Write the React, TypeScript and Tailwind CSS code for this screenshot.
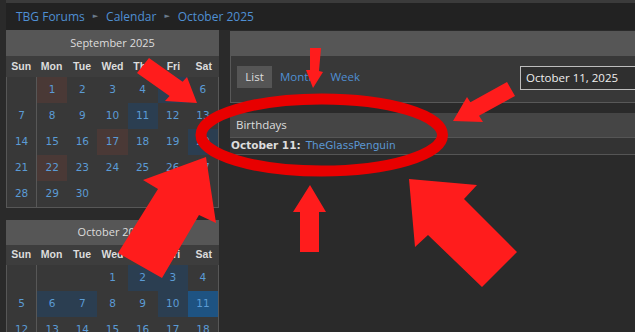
import React from "react";

type CalProps = {
  title: string;
  offset: number;
  days: number;
  hl: Record<number, "brown" | "blue" | "sel">;
  headCls: string;
  dowCls: string;
};

const DOW = ["Sun", "Mon", "Tue", "Wed", "Thu", "Fri", "Sat"];

function MiniCal({ title, offset, days, hl, headCls, dowCls }: CalProps) {
  const cells: (number | null)[] = [];
  for (let i = 0; i < offset; i++) cells.push(null);
  for (let d = 1; d <= days; d++) cells.push(d);
  while (cells.length % 7) cells.push(null);
  return (
    <div className="w-[213px]">
      <div className={headCls}>{title}</div>
      <div className={dowCls}>
        {DOW.map((d) => (
          <div key={d} className="flex items-center justify-center">
            {d}
          </div>
        ))}
      </div>
      <div className="grid grid-cols-7 border-x border-b border-[#575757] bg-[#383838] font-['DejaVu_Sans',sans-serif] text-[10.5px] text-[#5b9bd5]">
        {cells.map((c, i) => {
          const h = c ? hl[c] : undefined;
          let bg = "";
          if (h === "brown") bg = "bg-[#4a3936]";
          else if (h === "blue") bg = "bg-[#2b3e51]";
          else if (h === "sel") bg = "bg-[#1e5382]";
          const sun = i % 7 === 0 ? "border-r border-[#575757]" : "";
          return (
            <div key={i} className={`h-[26px] flex items-center justify-center ${bg} ${sun}`}>
              {c ?? ""}
            </div>
          );
        })}
      </div>
    </div>
  );
}

export default function App() {
  return (
    <div className="relative w-[635px] h-[332px] overflow-hidden bg-[#2a2a2a] font-['Open_Sans',sans-serif]">
      {/* breadcrumb */}
      <div className="ml-[6px] h-[30px] border-t-[3px] border-[#3b3b3b] bg-[#222222] flex items-center pl-[10px] text-[12px] text-[#4f8fd3]">
        <span>TBG Forums</span>
        <span className="mx-[8px] text-[7px] text-[#6a7a8a] font-['DejaVu_Sans',sans-serif]">►</span>
        <span>Calendar</span>
        <span className="mx-[8px] text-[7px] text-[#6a7a8a] font-['DejaVu_Sans',sans-serif]">►</span>
        <span>October 2025</span>
      </div>

      <div className="flex pl-[6px]">
        {/* sidebar */}
        <div className="flex flex-col gap-[12px] w-[213px] shrink-0">
          <MiniCal
            title="September 2025"
            offset={1}
            days={30}
            hl={{ 1: "brown", 5: "blue", 11: "blue", 17: "brown", 20: "blue", 22: "brown" }}
            headCls="h-[26px] bg-[#565656] flex items-center justify-center text-[11px] text-[#dddddd]"
            dowCls="h-[21px] grid grid-cols-7 bg-[#3d3d3d] font-['Liberation_Sans',sans-serif] font-bold text-[10.5px] text-[#dcdcdc]"
          />
          <MiniCal
            title="October 2025"
            offset={3}
            days={31}
            hl={{ 2: "blue", 3: "blue", 6: "blue", 7: "blue", 10: "blue", 11: "sel" }}
            headCls="h-[25px] bg-[#565656] flex items-center justify-center text-[11px] text-[#dddddd]"
            dowCls="h-[20px] grid grid-cols-7 bg-[#3d3d3d] font-['Liberation_Sans',sans-serif] font-bold text-[10.5px] text-[#dcdcdc]"
          />
        </div>

        {/* main */}
        <div className="ml-[11px] mt-[1px] w-[420px] shrink-0">
          <div className="h-[25px] bg-[#565656]" />
          <div className="h-[47px] border-l border-b border-[#585858] bg-[#383838] flex items-start pt-[10px] pl-[6px] pr-[6px] text-[11.5px]">
            <div className="w-[35px] h-[22px] bg-[#555555] flex items-center justify-center text-[#dddddd]">List</div>
            <span className="ml-[8px] h-[22px] flex items-center text-[#4f8fd3]">Month</span>
            <span className="ml-[15px] h-[22px] flex items-center text-[#4f8fd3]">Week</span>
            <div className="ml-auto w-[124px] h-[24px] border border-[#bdbdbd] bg-[#2f2f2f] flex items-center pl-[5px] text-[#eeeeee]">
              October 11, 2025
            </div>
          </div>
          <div className="mt-[10px]">
            <div className="h-[24px] bg-[#454545] flex items-center pl-[6px] text-[11.5px] text-[#dddddd]">Birthdays</div>
            <div className="h-[18px] border-t border-b border-[#555555] bg-[#333333] flex items-center pl-[1px] font-['DejaVu_Sans',sans-serif] text-[10.5px]">
              <span className="font-bold text-[#dddddd]">October 11:</span>
              <span className="ml-[5px] text-[#5b97d3]">TheGlassPenguin</span>
            </div>
          </div>
        </div>
      </div>

      {/* annotations */}
      <svg className="absolute inset-0 pointer-events-none" width="635" height="332" viewBox="0 0 635 332">
        <ellipse cx="321.75" cy="135" rx="120.75" ry="36" fill="none" stroke="#e80000" strokeWidth="11" />
        <g fill="#ff1c1c">
          <polygon points="149,58 182.6,81.8 187,77 197,103 165,101 169.6,96 137,73" />
          <polygon points="310,48 321,48 319,71 323,72 313,88 306,70 310,70" />
          <polygon points="453,121 467,97 470.4,102.2 507,82 515,96 479,115.8 483,122" />
          <polygon points="206,157 216,223 199,215 162,278 118,253 158,189 143,180" />
          <polygon points="310,185 326,212 319,212 319,252 300,252 300,212 293,212" />
          <polygon points="409,179 477,185 464,199 517,252 482,287 428,235 415,247" />
        </g>
      </svg>
    </div>
  );
}
